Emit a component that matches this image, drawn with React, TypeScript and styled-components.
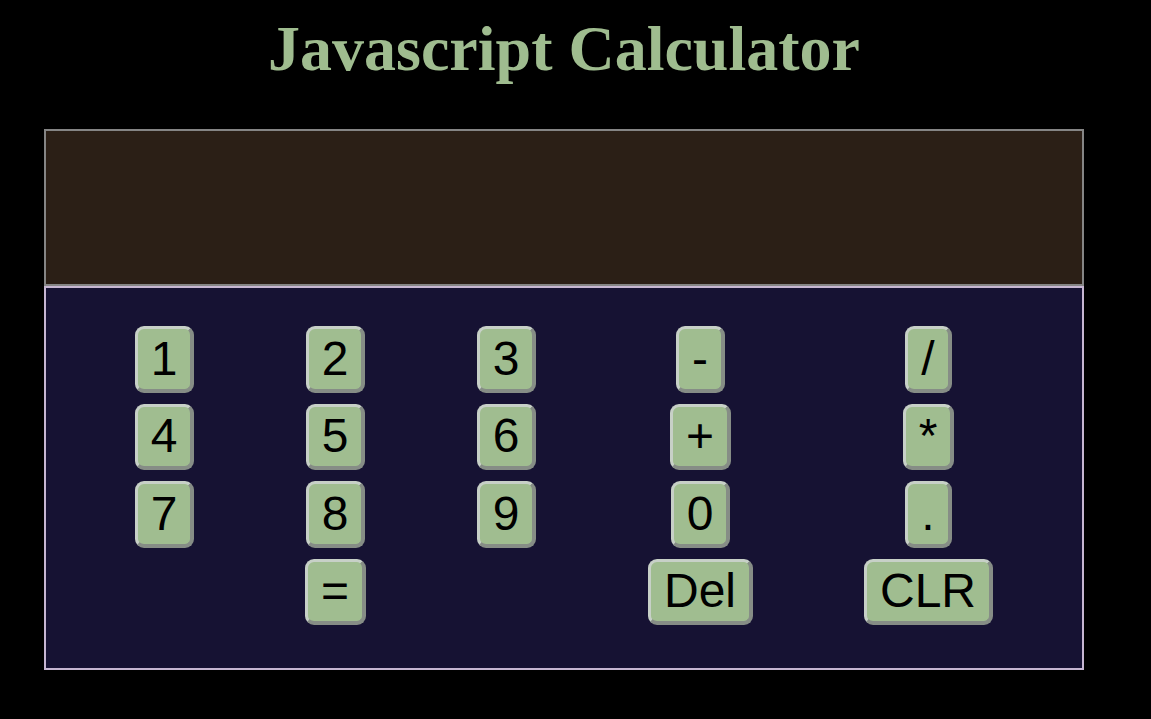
import React from "react";
import styled, { createGlobalStyle } from "styled-components";

const Global = createGlobalStyle`
  html, body {
    margin: 0;
    padding: 0;
    background: #000000;
  }
  * { box-sizing: border-box; }
`;

const Wrapper = styled.main`
  width: 1040px;
  margin-left: 44px;
  display: flex;
  flex-direction: column;
`;

const Title = styled.h1`
  margin: 12px 0 43px 0;
  font-family: "Liberation Serif", "Times New Roman", serif;
  font-weight: bold;
  font-size: 64px;
  line-height: 74px;
  color: #9fbc8f;
  text-align: center;
`;

const Calculator = styled.section`
  display: flex;
  flex-direction: column;
`;

const Display = styled.div`
  height: 157px;
  background: #2b1f16;
  border: 2px solid #858585;
  font-family: "Liberation Sans", Arial, sans-serif;
  color: #9fbc8f;
  font-size: 48px;
  display: flex;
  align-items: center;
  justify-content: flex-end;
  padding: 0 20px;
`;

const Keypad = styled.div`
  height: 384px;
  background: #161233;
  border: 2px solid #c6b6d2;
  padding: 38px 0 0 0;
  display: flex;
  justify-content: center;
`;

const KeyGrid = styled.div`
  display: grid;
  grid-template-columns: 171px 171px 171px 217px 239px;
  grid-auto-rows: 66.5px;
  row-gap: 11px;
  justify-items: center;
  align-items: center;
  width: 969px;
  height: fit-content;
  margin-left: -1px;
`;

const Key = styled.button`
  height: 66.5px;
  padding: 0 13px;
  background: #a0bd90;
  color: #000;
  font-family: "Liberation Sans", Arial, sans-serif;
  font-size: 48px;
  line-height: 1;
  border-style: solid;
  border-width: 3px 4px 4px 3px;
  border-color: #c7d0c7 #868d86 #868d86 #c7d0c7;
  border-radius: 9px;
  cursor: pointer;
`;

const Empty = styled.span``;

const rows: (string | null)[][] = [
  ["1", "2", "3", "-", "/"],
  ["4", "5", "6", "+", "*"],
  ["7", "8", "9", "0", "."],
  [null, "=", null, "Del", "CLR"],
];

export default function App() {
  return (
    <>
      <Global />
      <Wrapper>
        <Title>Javascript Calculator</Title>
        <Calculator>
          <Display />
          <Keypad>
            <KeyGrid>
              {rows.flat().map((k, i) =>
                k === null ? <Empty key={i} /> : <Key key={i}>{k}</Key>
              )}
            </KeyGrid>
          </Keypad>
        </Calculator>
      </Wrapper>
    </>
  );
}
